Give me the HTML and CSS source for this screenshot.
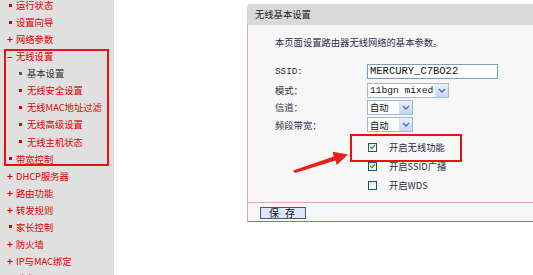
FILE: index.html
```html
<!DOCTYPE html>
<html lang="zh-CN">
  <head>
    <meta charset="UTF-8" />
    <title>无线基本设置</title>
    <link rel="stylesheet" href="styles.css">
  </head>
  <body>
    <div class="sidebar">
      <ul class="menu">
        <li><span class="mark dot"></span>运行状态</li>
        <li><span class="mark dot"></span>设置向导</li>
        <li><span class="mark">+</span>网络参数</li>
        <li><span class="mark">–</span>无线设置</li>
        <li class="sub current"><span class="mark dot"></span>基本设置</li>
        <li class="sub"><span class="mark dot"></span>无线安全设置</li>
        <li class="sub"><span class="mark dot"></span>无线MAC地址过滤</li>
        <li class="sub"><span class="mark dot"></span>无线高级设置</li>
        <li class="sub"><span class="mark dot"></span>无线主机状态</li>
        <li><span class="mark dot"></span>带宽控制</li>
        <li><span class="mark">+</span>DHCP服务器</li>
        <li><span class="mark">+</span>路由功能</li>
        <li><span class="mark">+</span>转发规则</li>
        <li><span class="mark dot"></span>家长控制</li>
        <li><span class="mark">+</span>防火墙</li>
        <li><span class="mark">+</span>IP与MAC绑定</li>
        <li><span class="mark dot"></span>动态DNS</li>
      </ul>
      <div class="note-box side-box"></div>
    </div>

    <div class="main">
      <div class="panel">
        <div class="panel-head">无线基本设置</div>
        <div class="panel-body">
          <p class="intro">本页面设置路由器无线网络的基本参数。</p>
          <div class="form">
            <label class="mono">SSID:</label>
            <div><span class="text-input mono">MERCURY_C7BO22</span></div>
            <label>模式：</label>
            <div>
              <span class="select wide"><span class="val mono">11bgn mixed</span><span class="drop"><svg width="8" height="5" viewBox="0 0 8 5"><path d="M1 1 L4 4 L7 1" fill="none" stroke="#4d6fae" stroke-width="1.4"/></svg></span></span>
            </div>
            <label>信道：</label>
            <div>
              <span class="select"><span class="val">自动</span><span class="drop"><svg width="8" height="5" viewBox="0 0 8 5"><path d="M1 1 L4 4 L7 1" fill="none" stroke="#4d6fae" stroke-width="1.4"/></svg></span></span>
            </div>
            <label>频段带宽：</label>
            <div>
              <span class="select"><span class="val">自动</span><span class="drop"><svg width="8" height="5" viewBox="0 0 8 5"><path d="M1 1 L4 4 L7 1" fill="none" stroke="#4d6fae" stroke-width="1.4"/></svg></span></span>
            </div>
          </div>
          <div class="checks">
            <div class="check"><span class="box"><svg width="8" height="8" viewBox="0 0 8 8"><path d="M1.5 4 L3.3 5.8 L6.8 1.8" fill="none" stroke="#2a9a2a" stroke-width="1.5"/></svg></span>开启无线功能</div>
            <div class="check"><span class="box"><svg width="8" height="8" viewBox="0 0 8 8"><path d="M1.5 4 L3.3 5.8 L6.8 1.8" fill="none" stroke="#2a9a2a" stroke-width="1.5"/></svg></span>开启SSID广播</div>
            <div class="check"><span class="box"></span>开启WDS</div>
          </div>
        </div>
        <div class="panel-foot">
          <span class="btn">保 存</span>
        </div>
      </div>

      <div class="note-box main-box"></div>
      <svg class="arrow" width="60" height="26" viewBox="0 0 60 26">
        <polygon points="3,20.5 43.8,6.4 42.6,1.8 58,4.6 46.8,15 45.4,10.4 5,23" fill="#e8201c"/>
      </svg>
    </div>
  </body>
</html>
```

FILE: styles.css
```css
* {
  margin: 0;
  padding: 0;
  box-sizing: border-box;
}

body {
  display: flex;
  height: 275px;
  overflow: hidden;
  background: #fff;
  font-family: "Noto Sans CJK SC", "DejaVu Sans", sans-serif;
  font-size: 9.3px;
  color: #2c2c44;
}

.mono {
  font-family: "Liberation Mono", "Noto Sans CJK SC", monospace;
}

/* left menu */
.sidebar {
  width: 114px;
  flex: none;
  background: #e0e0e0;
  position: relative;
}

.menu {
  list-style: none;
  margin-top: -3.5px;
}

.menu li {
  height: 17.07px;
  display: flex;
  align-items: center;
  color: #e00000;
  white-space: nowrap;
}

.menu .mark {
  width: 16px;
  padding-left: 7px;
  font-size: 10px;
  font-weight: bold;
  line-height: 1;
}

.menu .dot::before {
  content: "";
  display: block;
  width: 3px;
  height: 3px;
  margin-left: 2px;
  background: #e00000;
}

.menu .sub .mark {
  width: 27px;
  padding-left: 17px;
}

.menu .current {
  color: #333;
}

.menu .current .dot::before {
  background: #555;
}

/* annotation boxes */
.note-box {
  position: absolute;
  border: 2.5px solid #e81414;
}

.side-box {
  left: 4px;
  top: 49px;
  width: 105px;
  height: 117px;
}

.main-box {
  left: 236px;
  top: 134px;
  width: 112px;
  height: 28px;
}

.arrow {
  position: absolute;
  left: 176px;
  top: 150px;
}

/* main panel */
.main {
  flex: 1;
  position: relative;
  overflow: hidden;
  padding: 4px 0 0 133px;
}

.panel {
  width: 300px;
}

.panel-head {
  height: 21px;
  line-height: 21px;
  padding-left: 8px;
  background: #d9d9d9;
  border-radius: 3px 0 0 0;
  color: #1a1a1a;
}

.panel-body {
  background: #f7f7f7;
  border-left: 1px solid #e2a2a2;
  border-bottom: 1px solid #e6a8a8;
  padding: 11px 0 7px 27px;
  height: 178px;
}

.intro {
  line-height: 12px;
  color: #2b3050;
}

.form {
  display: grid;
  grid-template-columns: 92px auto;
  grid-auto-rows: 17.7px;
  align-items: center;
  margin-top: 15px;
}

.text-input {
  display: block;
  width: 131px;
  height: 15px;
  line-height: 13px;
  padding-left: 2px;
  border: 1px solid #7f9db9;
  background: #fff;
  font-size: 10.5px;
  color: #111;
}

.select {
  display: inline-flex;
  align-items: center;
  width: 46px;
  height: 15px;
  border: 1px solid #a5b9d5;
  background: #fff;
  color: #111;
}

.select.wide {
  width: 82px;
}

.select .val {
  flex: 1;
  padding-left: 2px;
}

.select .mono {
  font-size: 9.6px;
}

.select .drop {
  width: 13px;
  height: 13px;
  display: flex;
  align-items: center;
  justify-content: center;
  background: linear-gradient(#e8f0fd, #c4d6f3);
  border-left: 1px solid #d4e0f2;
}

.checks {
  margin-top: 4px;
  padding-left: 93px;
}

.check {
  height: 19px;
  display: flex;
  align-items: center;
}

.check .box {
  width: 9px;
  height: 9px;
  margin-right: 12px;
  border: 1px solid #1c5180;
  background: linear-gradient(#e6e6e0, #fbfbf8);
  display: flex;
  align-items: center;
  justify-content: center;
}

.panel-foot {
  height: 19px;
  background: #f7f7f7;
  border-left: 1px solid #e2a2a2;
  border-bottom: 1px solid #c86060;
  padding: 4px 0 0 12px;
}

.btn {
  display: block;
  width: 46px;
  height: 12px;
  line-height: 10px;
  text-align: center;
  letter-spacing: 2px;
  background: #dbe7fa;
  border: 1px solid #4a5a70;
  color: #111;
  font-size: 10px;
}
```
